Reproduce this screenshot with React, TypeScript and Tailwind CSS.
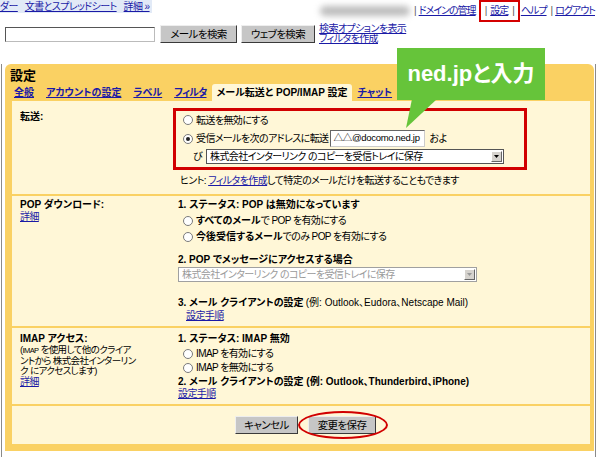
import React from 'react';

const link = 'text-[#1a1aa6] underline';

function Radio({ checked = false }: { checked?: boolean }) {
  return (
    <span className="inline-flex items-center justify-center w-[10px] h-[10px] rounded-full border border-[#7a7a7a] bg-white mr-[3px] shrink-0">
      {checked && <span className="w-[4px] h-[4px] rounded-full bg-[#222]" />}
    </span>
  );
}

function Select({ text, disabled = false, w }: { text: string; disabled?: boolean; w: string }) {
  return (
    <div
      className={`${w} h-[15px] flex items-center justify-between bg-white border ${
        disabled ? 'border-[#a0a0a0] text-[#9a9a9a]' : 'border-[#555] text-black'
      }`}
    >
      <span className="pl-[3px] leading-[13px]">{text}</span>
      <span className="w-[11px] h-[11px] mr-[1px] bg-[#d6d3ce] border-t border-l border-white border-b border-r border-b-[#666] border-r-[#666] flex items-center justify-center">
        <svg width="5" height="3" viewBox="0 0 5 3">
          <polygon points="0,0 5,0 2.5,3" fill={disabled ? '#999' : '#000'} />
        </svg>
      </span>
    </div>
  );
}

function Button({ children, w }: { children: React.ReactNode; w: string }) {
  return (
    <button
      className={`${w} h-[18px] bg-[#c6c6c6] border border-t-[#eee] border-l-[#eee] border-b-[#3a3a3a] border-r-[#3a3a3a] text-[10.5px] leading-none text-black`}
    >
      {children}
    </button>
  );
}

export default function App() {
  return (
    <div className="relative w-[600px] h-[457px] overflow-hidden bg-white text-[10px] tracking-[-0.6px] text-black font-['Liberation_Sans','Noto_Sans_CJK_JP',sans-serif] [font-feature-settings:'palt']">
      {/* top links */}
      <div className="h-[24px] flex items-start justify-between">
        <div className="h-[13px] bg-[#e2eaf7] flex items-center gap-[7px] pr-[2px] leading-none">
          <span className={link}>ダー</span>
          <span className={link}>文書とスプレッドシート</span>
          <span className={link}>詳細 »</span>
        </div>
        <div className="flex items-center h-[22px] pr-[5px] leading-none tracking-[-1px]">
          <span className="w-[90px] h-[10px] mr-[4px] rounded-full bg-[#bdbdbd] blur-[3px]" />
          <span className="text-[#555]">|</span>
          <span className={`${link} ml-[3px]`}>ドメインの管理</span>
          <span className="ml-[3px] flex items-center h-[22px] px-[4px] border-2 border-[#d40000]">
            <span className="text-[#555]">|</span>
            <span className={`${link} ml-[4px]`}>設定</span>
            <span className="text-[#555] ml-[4px]">|</span>
          </span>
          <span className={`${link} ml-[1px]`}>ヘルプ</span>
          <span className="text-[#555] ml-[4px]">|</span>
          <span className={`${link} ml-[3px]`}>ログアウト</span>
        </div>
      </div>

      {/* search row */}
      <div className="h-[20px] flex items-start pl-[5px]">
        <div className="mt-[3px] w-[150px] h-[15px] bg-white border border-t-[#555] border-l-[#555] border-b-[#bbb] border-r-[#bbb]" />
        <div className="ml-[5px] mt-[1px]">
          <Button w="w-[77px]">メールを検索</Button>
        </div>
        <div className="ml-[4px] mt-[1px]">
          <Button w="w-[74px]">ウェブを検索</Button>
        </div>
        <div className="ml-[4px] flex flex-col text-[10px] leading-[10px]">
          <span className={link}>検索オプションを表示</span>
          <span className={link}>フィルタを作成</span>
        </div>
      </div>

      {/* framed settings area */}
      <div className="ml-[1px] w-[595px] h-[412px] border-l border-r border-b border-[#8a8a8a]">
        <div className="ml-[3px] mt-[20px] w-[589px] rounded-t-[6px] bg-[#fad163]">
          <div className="h-[20px] pl-[5px] pt-[5px] text-[13px] font-bold leading-[14px] tracking-normal">設定</div>
          <div className="h-[17px] flex items-end pl-[9px] text-[10px] font-bold leading-none tracking-normal">
            <span className={`${link} mb-[3px]`}>全般</span>
            <span className={`${link} mb-[3px] ml-[12px]`}>アカウントの設定</span>
            <span className={`${link} mb-[3px] ml-[12px]`}>ラベル</span>
            <span className={`${link} mb-[3px] ml-[12px] tracking-[-0.8px]`}>フィルタ</span>
            <span className="ml-[5px] h-[17px] px-[5px] flex items-center bg-[#fff7d7] rounded-t-[3px]">
              メール転送と POP/IMAP 設定
            </span>
            <span className={`${link} mb-[3px] ml-[5px]`}>チャット</span>
          </div>

          <div className="pl-[7px] pr-[4px] pb-[7px]">
            <div className="bg-[#fff7d7]">
              {/* forwarding */}
              <div className="h-[93px] flex">
                <div className="w-[164px] pl-[8px] pt-[10px] font-bold leading-[12px] tracking-normal">転送:</div>
                <div className="flex-1 pt-[7px]">
                  <div className="-ml-[3px] w-[354px] border-[3px] border-[#d10000] pl-[7px] pb-[3px]">
                    <div className="h-[18px] flex items-center">
                      <Radio />
                      <span>転送を無効にする</span>
                    </div>
                    <div className="h-[19px] flex items-center">
                      <Radio checked />
                      <span>受信メールを次のアドレスに転送</span>
                      <span className="ml-[2px] w-[95px] h-[17px] bg-white border border-t-[#666] border-l-[#666] border-b-[#ccc] border-r-[#ccc] flex items-center pl-[2px] overflow-hidden whitespace-nowrap text-[9.5px] tracking-[-0.3px]">
                        △△@docomo.ned.jp
                      </span>
                      <span className="ml-[4px]">およ</span>
                    </div>
                    <div className="h-[16px] flex items-center pl-[10px]">
                      <span>び</span>
                      <span className="ml-[4px]">
                        <Select w="w-[298px]" text="株式会社インターリンク のコピーを受信トレイに保存" />
                      </span>
                    </div>
                  </div>
                  <div className="mt-[5px] pl-[4px] leading-[12px]">
                    ヒント: <span className={link}>フィルタを作成</span>して特定のメールだけを転送することもできます
                  </div>
                </div>
              </div>
              <div className="h-[2px] bg-[#fad163]" />

              {/* POP */}
              <div className="h-[130px] flex leading-[12px]">
                <div className="w-[164px] pl-[8px] pt-[3px]">
                  <div className="font-bold tracking-normal">POP ダウンロード:</div>
                  <div className={link}>詳細</div>
                </div>
                <div className="flex-1 pt-[3px] pl-[2px]">
                  <div className="font-bold tracking-normal">1. ステータス: POP は無効になっています</div>
                  <div className="mt-[2px] h-[16px] flex items-center pl-[5px]">
                    <Radio />
                    <span>
                      <b className="tracking-normal">すべてのメール</b>で POP を有効にする
                    </span>
                  </div>
                  <div className="h-[15px] flex items-center pl-[5px]">
                    <Radio />
                    <span>
                      <b className="tracking-normal">今後受信するメール</b>でのみ POP を有効にする
                    </span>
                  </div>
                  <div className="mt-[10px] font-bold tracking-normal">2. POP でメッセージにアクセスする場合</div>
                  <div className="mt-[1px]">
                    <Select w="w-[299px]" disabled text="株式会社インターリンク のコピーを受信トレイに保存" />
                  </div>
                  <div className="mt-[15px]">
                    <b className="tracking-normal">3. メール クライアントの設定</b>{' '}
                    <span className="tracking-normal">(例: Outlook、Eudora、Netscape Mail)</span>
                  </div>
                  <div className={`mt-[1px] ml-[8px] ${link}`}>設定手順</div>
                </div>
              </div>
              <div className="h-[2px] bg-[#fad163]" />

              {/* IMAP */}
              <div className="h-[76px] flex leading-[12px]">
                <div className="w-[164px] pl-[8px] pt-[5px]">
                  <div className="font-bold tracking-normal">IMAP アクセス:</div>
                  <div className="text-[9.5px] leading-[10px]">
                    (<span className="text-[7.5px]">IMAP</span> を使用して他のクライア
                    <br />
                    ントから 株式会社インターリン
                    <br />
                    ク にアクセスします)
                  </div>
                  <div className={link}>詳細</div>
                </div>
                <div className="flex-1 pt-[5px] pl-[2px]">
                  <div className="font-bold tracking-normal">1. ステータス: IMAP 無効</div>
                  <div className="mt-[2px] h-[14px] flex items-center pl-[5px]">
                    <Radio />
                    <span>IMAP を有効にする</span>
                  </div>
                  <div className="h-[14px] flex items-center pl-[5px]">
                    <Radio />
                    <span>IMAP を無効にする</span>
                  </div>
                  <div className="mt-[1px] font-bold tracking-normal">2. メール クライアントの設定 (例: Outlook、Thunderbird、iPhone)</div>
                  <div className={link}>設定手順</div>
                </div>
              </div>
              <div className="h-[2px] bg-[#fad163]" />

              {/* buttons */}
              <div className="h-[38px] flex justify-center items-start pt-[10px] pl-[9px] gap-[10px]">
                <Button w="w-[63px]">キャンセル</Button>
                <div className="relative">
                  <Button w="w-[68px]">変更を保存</Button>
                  <span className="absolute -left-[10px] -right-[12px] -top-[5px] -bottom-[5px] rounded-[50%] border-2 border-[#d10000]" />
                </div>
              </div>
            </div>
          </div>
        </div>
      </div>

      {/* callout */}
      <div className="absolute left-[397px] top-[48px] w-[148px] h-[52px] bg-[#66c43a] flex items-center justify-center text-white font-bold text-[22px] leading-none tracking-normal">
        ned.jpと入力
      </div>
      <svg className="absolute left-[400px] top-[99px]" width="40" height="30" viewBox="0 0 40 30">
        <polygon points="12,0 37,0 6,29" fill="#66c43a" />
      </svg>
    </div>
  );
}
